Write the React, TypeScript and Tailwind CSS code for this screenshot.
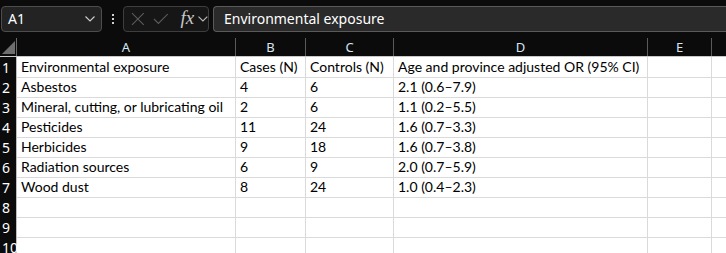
import React from "react";

const cols = [
  { key: "A", w: 219 },
  { key: "B", w: 70 },
  { key: "C", w: 88 },
  { key: "D", w: 254 },
  { key: "E", w: 64 },
];

const data: string[][] = [
  ["Environmental exposure", "Cases (N)", "Controls (N)", "Age and province adjusted OR (95% CI)", ""],
  ["Asbestos", "4", "6", "2.1 (0.6–7.9)", ""],
  ["Mineral, cutting, or lubricating oil", "2", "6", "1.1 (0.2–5.5)", ""],
  ["Pesticides", "11", "24", "1.6 (0.7–3.3)", ""],
  ["Herbicides", "9", "18", "1.6 (0.7–3.8)", ""],
  ["Radiation sources", "6", "9", "2.0 (0.7–5.9)", ""],
  ["Wood dust", "8", "24", "1.0 (0.4–2.3)", ""],
  ["", "", "", "", ""],
  ["", "", "", "", ""],
  ["", "", "", "", ""],
];

function Chevron({ className = "" }: { className?: string }) {
  return (
    <svg width="10" height="6" viewBox="0 0 10 6" className={className}>
      <path d="M0.5 0.5 L5 5 L9.5 0.5" fill="none" stroke="currentColor" strokeWidth="1.1" />
    </svg>
  );
}

export default function App() {
  return (
    <div className="w-[726px] h-[253px] overflow-hidden bg-[#0b0b0b]" style={{ fontFamily: "'Noto Sans', sans-serif" }}>
      {/* toolbar */}
      <div className="flex items-center h-[36px] pt-[1px]">
        <div className="ml-[1px] w-[101px] h-[26px] rounded-[4px] border border-[#4d4d4d] bg-[#232323] flex items-center justify-between pl-[6px] pr-[6px]">
          <span className="text-white text-[14px] leading-none">A1</span>
          <Chevron className="text-[#cfcfcf]" />
        </div>
        <div className="w-[21px] flex flex-col items-center gap-[2px]">
          <span className="w-[2px] h-[2px] bg-[#d0d0d0]" />
          <span className="w-[2px] h-[2px] bg-[#d0d0d0]" />
          <span className="w-[2px] h-[2px] bg-[#d0d0d0]" />
        </div>
        <div className="w-[86px] h-[26px] rounded-[4px] border border-[#3e3e3e] bg-[#161616] flex items-center pl-[7px]">
          <svg width="14" height="14" viewBox="0 0 14 14">
            <path d="M1 1 L13 13 M13 1 L1 13" stroke="#5c5c5c" strokeWidth="1.1" fill="none" />
          </svg>
          <svg width="16" height="12" viewBox="0 0 16 12" className="ml-[8px]">
            <path d="M1 6 L5.5 10.5 L15 1" stroke="#5c5c5c" strokeWidth="1.1" fill="none" />
          </svg>
          <span className="ml-[12px] text-[#c8c8c8] italic text-[19px] leading-none -mt-[2px]" style={{ fontFamily: "'Liberation Serif', serif" }}>fx</span>
          <Chevron className="ml-[4px] text-[#bdbdbd]" />
        </div>
        <div className="ml-[4px] flex-1 h-[26px] rounded-l-[4px] border border-r-0 border-[#5a5a5a] bg-[#2a2a2a] flex items-center pl-[10px]">
          <span className="text-white text-[14px] leading-none">Environmental exposure</span>
        </div>
      </div>

      {/* column headers */}
      <div className="flex h-[21px] border-b border-[#c8c8c8]">
        <div className="w-[17px] shrink-0 relative border-r border-[#6a6a6a] mt-[2px]">
          <svg width="13" height="13" viewBox="0 0 13 13" className="absolute left-[2px] top-[3px]">
            <path d="M13 0 L13 13 L0 13 Z" fill="#6e6e6e" />
          </svg>
        </div>
        {cols.map((c) => (
          <div
            key={c.key}
            style={{ width: c.w }}
            className="shrink-0 border-r border-[#5a5a5a] mt-[2px] flex items-center justify-center text-[13px] text-[#d6e6f5] leading-none"
          >
            {c.key}
          </div>
        ))}
        <div className="flex-1 mt-[2px]" />
      </div>

      {/* rows */}
      {data.map((row, i) => (
        <div key={i} className={`flex ${i === 0 ? "h-[21px]" : "h-[20px]"}`}>
          <div className="w-[17px] shrink-0 bg-[#0b0b0b] border-r border-[#bdbdbd] text-white text-[14px] leading-none flex items-end pb-[3px] pl-[2px]">
            {i + 1}
          </div>
          {row.map((cell, j) => (
            <div
              key={j}
              style={{ width: cols[j].w, fontFamily: "'Lato', sans-serif" }}
              className="shrink-0 bg-white border-r border-b border-[#dadada] text-black text-[14px] leading-none flex items-end pb-[3px] pl-[4px] whitespace-nowrap overflow-visible"
            >
              {cell}
            </div>
          ))}
          <div className="flex-1 bg-white border-b border-[#dadada]" />
        </div>
      ))}
    </div>
  );
}
